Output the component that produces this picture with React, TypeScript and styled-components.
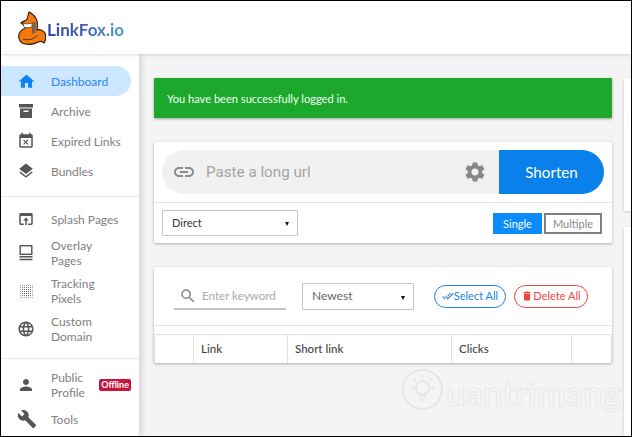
import React from 'react';
import styled, { createGlobalStyle } from 'styled-components';
import {
  MdHome, MdEventBusy, MdLayers, MdOpenInBrowser, MdLanguage, MdPerson, MdBuild,
  MdLink, MdSettings, MdSearch, MdDoneAll, MdDelete,
} from 'react-icons/md';

const FONT = `Lato, "Open Sans", "Liberation Sans", sans-serif`;

const FoxLogo = () => (
  <svg width="28" height="34" viewBox="17 10 28 34">
    <path d="M28 11 C32 13 35 16 36 20 C37 24 36 27 36 29 C38 28 42 29 44 32 C45 35 45 39 43 42 C41 40 39 40 37 41 C33 44 25 44 21 42 C17 39 17 34 19 31 C21 28 25 27 27 25 C25 25 22 24 20 22 C22 20 25 20 26 18 C27 16 27 13 28 11 Z" fill="#f47a0e" stroke="#2a1a0a" strokeWidth="1.1" />
    <path d="M22 22.5 C25 23 28 23 31 22 L31 26 C28 27 25 27 23 26 Z" fill="#fff" stroke="#2a1a0a" strokeWidth="0.6" />
    <path d="M31 21 L34.5 21 L34.5 32 L31 33 Z" fill="#77624e" />
    <path d="M22 38 C27 40 33 38 37 34" fill="none" stroke="#2a1a0a" strokeWidth="0.8" />
  </svg>
);

const ArchiveIcon = () => (
  <svg width="18" height="18" viewBox="0 0 18 18" fill="#555">
    <rect x="2" y="2" width="14" height="3.5" />
    <path d="M3 6.5H15V16H3Z M6.5 8.5V10H11.5V8.5Z" fillRule="evenodd" />
  </svg>
);

const OverlayIcon = () => (
  <svg width="18" height="18" viewBox="0 0 18 18" fill="none" stroke="#555" strokeWidth="1.4">
    <rect x="3.2" y="1.7" width="11.6" height="8.6" />
    <path d="M2.5 12.7H15.5M2.5 15.5H15.5" />
  </svg>
);

const PixelsIcon = () => {
  const dots = [];
  for (let r = 0; r < 7; r++) {
    for (let c = 0; c < 7; c++) {
      const edge = Math.max(Math.abs(r - 3), Math.abs(c - 3));
      dots.push(
        <rect
          key={`${r}-${c}`}
          x={3 + c * 2}
          y={3 + r * 2}
          width={1}
          height={1}
          fill="#555"
          opacity={edge === 3 ? 0.55 : edge === 2 ? 0.8 : 1}
        />,
      );
    }
  }
  return <svg width="18" height="18" viewBox="0 0 18 18" shapeRendering="crispEdges">{dots}</svg>;
};

interface NavEntry {
  label: string;
  icon: React.ReactNode;
  active?: boolean;
  badge?: string;
}

const mainNav: NavEntry[] = [
  { label: 'Dashboard', icon: <MdHome size={19} />, active: true },
  { label: 'Archive', icon: <ArchiveIcon /> },
  { label: 'Expired Links', icon: <MdEventBusy size={18} /> },
  { label: 'Bundles', icon: <MdLayers size={18} /> },
];

const pageNav: NavEntry[] = [
  { label: 'Splash Pages', icon: <MdOpenInBrowser size={18} /> },
  { label: 'Overlay\nPages', icon: <OverlayIcon /> },
  { label: 'Tracking\nPixels', icon: <PixelsIcon /> },
  { label: 'Custom\nDomain', icon: <MdLanguage size={18} /> },
];

const userNav: NavEntry[] = [
  { label: 'Public\nProfile', icon: <MdPerson size={18} />, badge: 'Offline' },
  { label: 'Tools', icon: <MdBuild size={20} /> },
];

const NavGroup = ({ items }: { items: NavEntry[] }) => (
  <NavList>
    {items.map((item) => (
      <NavItem key={item.label} $active={item.active}>
        <NavIcon $active={item.active}>{item.icon}</NavIcon>
        <NavLabel>{item.label}</NavLabel>
        {item.badge && <Badge>{item.badge}</Badge>}
      </NavItem>
    ))}
  </NavList>
);

const App = () => {
  return (
    <Page>
      <GlobalStyle />
      <Header>
        <FoxLogo />
        <Brand>LinkFox.io</Brand>
      </Header>
      <Columns>
        <Sidebar>
          <NavGroup items={mainNav} />
          <NavGroup items={pageNav} />
          <NavGroup items={userNav} />
        </Sidebar>
        <Main>
          <LeftColumn>
            <Alert>You have been successfully logged in.</Alert>
            <Card>
              <ShortenRow>
                <MdLink size={24} color="#8c8c8c" />
                <UrlPlaceholder>Paste a long url</UrlPlaceholder>
                <MdSettings size={24} color="#888" />
                <ShortenButton>Shorten</ShortenButton>
              </ShortenRow>
              <OptionsRow>
                <SelectBox $width={136} $height={26}>
                  Direct
                  <Caret />
                </SelectBox>
                <ToggleGroup>
                  <ToggleButton $on>Single</ToggleButton>
                  <ToggleButton>Multiple</ToggleButton>
                </ToggleGroup>
              </OptionsRow>
            </Card>
            <Card>
              <FilterRow>
                <SearchField>
                  <MdSearch size={18} color="#888" />
                  Enter keyword
                </SearchField>
                <SelectBox $width={112} $height={27} $muted>
                  Newest
                  <Caret />
                </SelectBox>
                <PillButton $color="#1b83e0" $width={72} $first>
                  <MdDoneAll size={12} />
                  Select All
                </PillButton>
                <PillButton $color="#f2453d" $width={74}>
                  <MdDelete size={12} />
                  Delete All
                </PillButton>
              </FilterRow>
              <LinkTable>
                <thead>
                  <tr>
                    <HeadCell $width={39} />
                    <HeadCell $width={94}>Link</HeadCell>
                    <HeadCell $width={164}>Short link</HeadCell>
                    <HeadCell $width={120}>Clicks</HeadCell>
                    <HeadCell />
                  </tr>
                </thead>
              </LinkTable>
            </Card>
          </LeftColumn>
          <RightColumn>
            <SideCard $height={133} />
            <SideCard $height={300} />
          </RightColumn>
          <Watermark>
            <WatermarkBulb>
              <svg width="37" height="37" viewBox="0 0 44 44" fill="none" stroke="#e4e4e4" strokeWidth="2">
                <circle cx="22" cy="20" r="8" />
                <path d="M18 30h8M19 34h6M22 4v4M8 20h4M32 20h4M11 9l3 3M33 9l-3 3" />
              </svg>
            </WatermarkBulb>
            <WatermarkText>uantrimang</WatermarkText>
          </Watermark>
        </Main>
      </Columns>
    </Page>
  );
};

export default App;

const GlobalStyle = createGlobalStyle`
  html, body {
    margin: 0;
    padding: 0;
    height: 437px;
    overflow: hidden;
    background: #000;
  }
  * {
    box-sizing: border-box;
  }
`;

const Page = styled.div`
  width: 630px;
  height: 435px;
  margin: 1px 0 0 1px;
  display: flex;
  flex-direction: column;
  overflow: hidden;
  background: #f4f4f4;
  font-family: ${FONT};
`;

const Header = styled.header`
  height: 53px;
  flex-shrink: 0;
  display: flex;
  align-items: center;
  gap: 1px;
  padding: 0 0 0 17px;
  background: #fff;
  box-shadow: 0 1px 3px rgba(0, 0, 0, 0.15);
  position: relative;
  z-index: 2;
`;

const Brand = styled.div`
  font-size: 17px;
  font-weight: 700;
  margin-top: 3px;
  background: linear-gradient(90deg, #33429f 0%, #3f63b5 50%, #4c9ad2 100%);
  -webkit-background-clip: text;
  background-clip: text;
  color: transparent;
`;

const Columns = styled.div`
  flex: 1;
  display: flex;
  min-height: 0;
`;

const Sidebar = styled.nav`
  width: 138px;
  flex-shrink: 0;
  background: #fff;
  box-shadow: 3px 0 6px rgba(0, 0, 0, 0.12);
  padding-top: 12px;
  position: relative;
  z-index: 1;
`;

const NavList = styled.ul`
  list-style: none;
  margin: 0;
  padding: 0 0 10px;
  & + & {
    border-top: 1px solid #eaeaea;
    padding-top: 7px;
  }
`;

const NavItem = styled.li<{ $active?: boolean }>`
  display: flex;
  align-items: center;
  width: 130px;
  min-height: 30px;
  padding-left: 16px;
  border-radius: 0 16px 16px 0;
  background: ${(p) => (p.$active ? '#cce7ff' : 'transparent')};
  color: ${(p) => (p.$active ? '#2a86f0' : '#808080')};
`;

const NavIcon = styled.span<{ $active?: boolean }>`
  width: 34px;
  flex-shrink: 0;
  display: flex;
  color: ${(p) => (p.$active ? '#0d84f5' : '#555')};
`;

const NavLabel = styled.span`
  flex-grow: 1;
  font-size: 12px;
  line-height: 15px;
  padding: 4px 0;
  white-space: pre-line;
`;

const Badge = styled.span`
  background: #c8133a;
  color: #fff;
  font-size: 9px;
  font-weight: 700;
  line-height: 12px;
  padding: 0 2px;
  border-radius: 2px;
`;

const Main = styled.main`
  flex: 1;
  display: flex;
  gap: 12px;
  padding: 24px 0 0 15px;
  min-width: 0;
  position: relative;
`;

const LeftColumn = styled.div`
  width: 458px;
  flex-shrink: 0;
  display: flex;
  flex-direction: column;
  gap: 24px;
  position: relative;
  z-index: 1;
`;

const RightColumn = styled.div`
  flex: 1;
  display: flex;
  flex-direction: column;
  gap: 16px;
`;

const SideCard = styled.div<{ $height: number }>`
  height: ${(p) => p.$height}px;
  background: #fff;
  box-shadow: 0 1px 3px rgba(0, 0, 0, 0.2);
  flex-shrink: 0;
`;

const Alert = styled.div`
  height: 40px;
  display: flex;
  align-items: center;
  padding-left: 13px;
  background: #1ca82c;
  color: #f2fff2;
  font-size: 11.1px;
  border-radius: 1px;
  box-shadow: 0 1px 3px rgba(0, 0, 0, 0.35);
`;

const Card = styled.section`
  background: #fff;
  border-radius: 2px;
  box-shadow: 0 1px 3px rgba(0, 0, 0, 0.3);
`;

const ShortenRow = styled.div`
  display: flex;
  align-items: center;
  height: 44px;
  margin: 8px;
  padding-left: 10px;
  background: #f1f1f1;
  border-radius: 22px;
  overflow: hidden;
`;

const UrlPlaceholder = styled.div`
  flex: 1;
  padding-left: 10px;
  font-family: Roboto, sans-serif;
  font-size: 15.2px;
  color: #a4a4a4;
`;

const ShortenButton = styled.button`
  width: 105px;
  height: 44px;
  margin-left: 12px;
  border: none;
  background: #0a80ea;
  color: #fff;
  font-family: ${FONT};
  font-size: 15.2px;
`;

const OptionsRow = styled.div`
  display: flex;
  justify-content: space-between;
  align-items: center;
  height: 41px;
  padding: 0 10px 0 8px;
  border-top: 1px solid #e4e4e4;
`;

const SelectBox = styled.div<{ $width: number; $height: number; $muted?: boolean }>`
  width: ${(p) => p.$width}px;
  height: ${(p) => p.$height}px;
  display: flex;
  align-items: center;
  justify-content: space-between;
  padding: 0 8px 2px 9px;
  background: #fff;
  border: 1px solid #c4c4c4;
  border-radius: 1px;
  font-size: ${(p) => (p.$muted ? 12 : 11)}px;
  color: ${(p) => (p.$muted ? '#666' : '#333')};
`;

const Caret = styled.span`
  width: 0;
  height: 0;
  margin-top: 4px;
  border-left: 2.5px solid transparent;
  border-right: 2.5px solid transparent;
  border-top: 4px solid #111;
`;

const ToggleGroup = styled.div`
  display: flex;
  gap: 2px;
`;

const ToggleButton = styled.button<{ $on?: boolean }>`
  height: 21px;
  padding: 0;
  width: ${(p) => (p.$on ? 49 : 58)}px;
  border: 2px solid ${(p) => (p.$on ? '#0a8cff' : '#808080')};
  background: ${(p) => (p.$on ? '#0a8cff' : '#fff')};
  color: ${(p) => (p.$on ? '#fff' : '#888')};
  font-family: ${FONT};
  font-size: 11px;
`;

const FilterRow = styled.div`
  display: flex;
  align-items: center;
  height: 59px;
  padding: 1px 0 0 20px;
  border-bottom: 1px solid #e4e4e4;
`;

const SearchField = styled.div`
  width: 112px;
  height: 27px;
  margin-right: 16px;
  display: flex;
  align-items: center;
  gap: 5px;
  padding-left: 5px;
  border-bottom: 2px solid #c4c4c4;
  color: #aaa;
  font-size: 11.6px;
`;

const PillButton = styled.button<{ $color: string; $width: number; $first?: boolean }>`
  width: ${(p) => p.$width}px;
  height: 23px;
  display: flex;
  align-items: center;
  justify-content: center;
  padding: 0 0 2px;
  margin-left: ${(p) => (p.$first ? 20 : 8)}px;
  background: #fff;
  border: 1px solid ${(p) => p.$color};
  border-radius: 12px;
  color: ${(p) => p.$color};
  font-family: ${FONT};
  font-size: 11px;
  white-space: nowrap;
`;

const LinkTable = styled.table`
  width: 100%;
  margin-top: 8px;
  border-collapse: collapse;
  table-layout: fixed;
`;

const HeadCell = styled.th<{ $width?: number }>`
  width: ${(p) => (p.$width ? `${p.$width}px` : 'auto')};
  height: 28px;
  padding: 0 0 0 7px;
  text-align: left;
  font-size: 11.5px;
  font-weight: 500;
  color: #444;
  border: 1px solid #e0e0e0;
  border-bottom: none;
`;

const Watermark = styled.div`
  position: absolute;
  left: 263px;
  top: 311px;
  display: flex;
  align-items: center;
`;

const WatermarkBulb = styled.div`
  width: 41px;
  height: 41px;
  border: 2px solid #e6e6e6;
  border-radius: 50%;
`;

const WatermarkText = styled.div`
  font-size: 34.6px;
  font-weight: 700;
  line-height: 40px;
  color: #f4f4f4;
  -webkit-text-stroke: 0.6px #e2e2e2;
  margin: 8px 0 0 3px;
`;
